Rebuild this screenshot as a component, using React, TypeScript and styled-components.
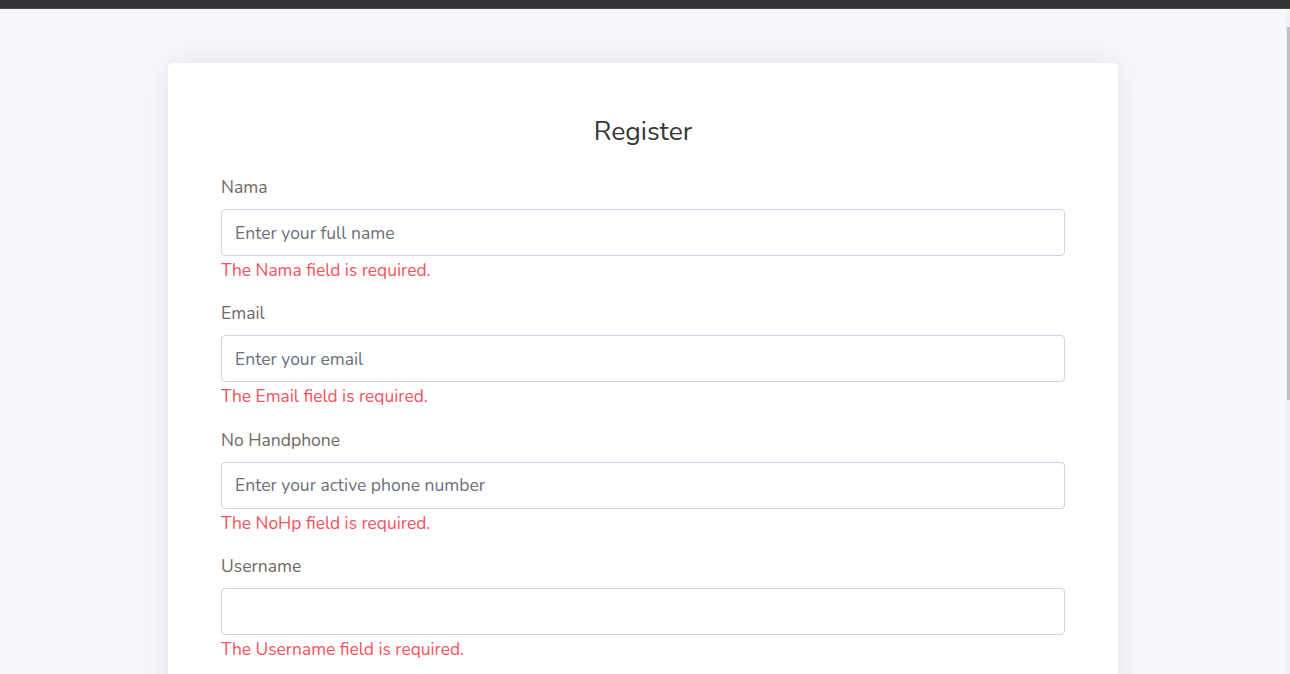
import React from 'react';
import styled, { createGlobalStyle } from 'styled-components';

const GlobalStyle = createGlobalStyle`
  html, body {
    margin: 0;
    padding: 0;
    height: 100%;
    overflow: hidden;
    background: #f7f8fc;
  }
  body {
    font-family: 'Nunito', Lato, 'Noto Sans', sans-serif;
    color: #6b6464;
  }
  * {
    box-sizing: border-box;
  }
`;

const TopBar = styled.div`
  height: 9px;
  background: #343434;
  border-bottom: 1px solid #4a4a4a;
`;

const Page = styled.main`
  display: flex;
  justify-content: center;
  padding: 54px 172px 0 168px;
`;

const Card = styled.section`
  width: 950px;
  min-height: 700px;
  background: #ffffff;
  border-radius: 5px;
  box-shadow: 0 0 34px rgba(20, 24, 70, 0.09);
  padding: 53px 53px 40px;
`;

const Title = styled.h2`
  margin: 0 0 29px;
  text-align: center;
  font-size: 26.5px;
  font-weight: 400;
  line-height: 30px;
  color: #373737;
`;

const Group = styled.div`
  display: flex;
  flex-direction: column;
  margin-bottom: 19.3px;
`;

const Label = styled.label`
  font-size: 17.5px;
  line-height: 24px;
  color: #706868;
  margin-bottom: 10px;
`;

const Input = styled.input`
  height: 47px;
  width: 100%;
  border: 1px solid #d4d2e4;
  border-radius: 4px;
  padding: 0 13px;
  font-family: inherit;
  font-size: 17.5px;
  color: #495057;
  background: #fff;
  outline: none;
  &::placeholder {
    color: #6c6f7a;
  }
`;

const ErrorText = styled.span`
  margin-top: 2px;
  font-size: 17.4px;
  line-height: 24px;
  color: #f5525d;
`;

const ScrollTrack = styled.div`
  position: fixed;
  top: 10px;
  right: 0;
  bottom: 0;
  width: 4px;
  background: #f1f1f1;
`;

const ScrollThumb = styled.div`
  margin: 17px 0 0 1px;
  height: 373px;
  background: #c1c1c1;
`;

interface FieldProps {
  label: string;
  placeholder?: string;
  error: string;
}

const Field = ({ label, placeholder, error }: FieldProps) => (
  <Group>
    <Label>{label}</Label>
    <Input type="text" placeholder={placeholder} />
    <ErrorText>{error}</ErrorText>
  </Group>
);

const fields: FieldProps[] = [
  { label: 'Nama', placeholder: 'Enter your full name', error: 'The Nama field is required.' },
  { label: 'Email', placeholder: 'Enter your email', error: 'The Email field is required.' },
  {
    label: 'No Handphone',
    placeholder: 'Enter your active phone number',
    error: 'The NoHp field is required.',
  },
  { label: 'Username', error: 'The Username field is required.' },
];

export default function App() {
  return (
    <>
      <GlobalStyle />
      <TopBar />
      <Page>
        <Card>
          <Title>Register</Title>
          <form>
            {fields.map((f) => (
              <Field key={f.label} {...f} />
            ))}
          </form>
        </Card>
      </Page>
      <ScrollTrack>
        <ScrollThumb />
      </ScrollTrack>
    </>
  );
}
